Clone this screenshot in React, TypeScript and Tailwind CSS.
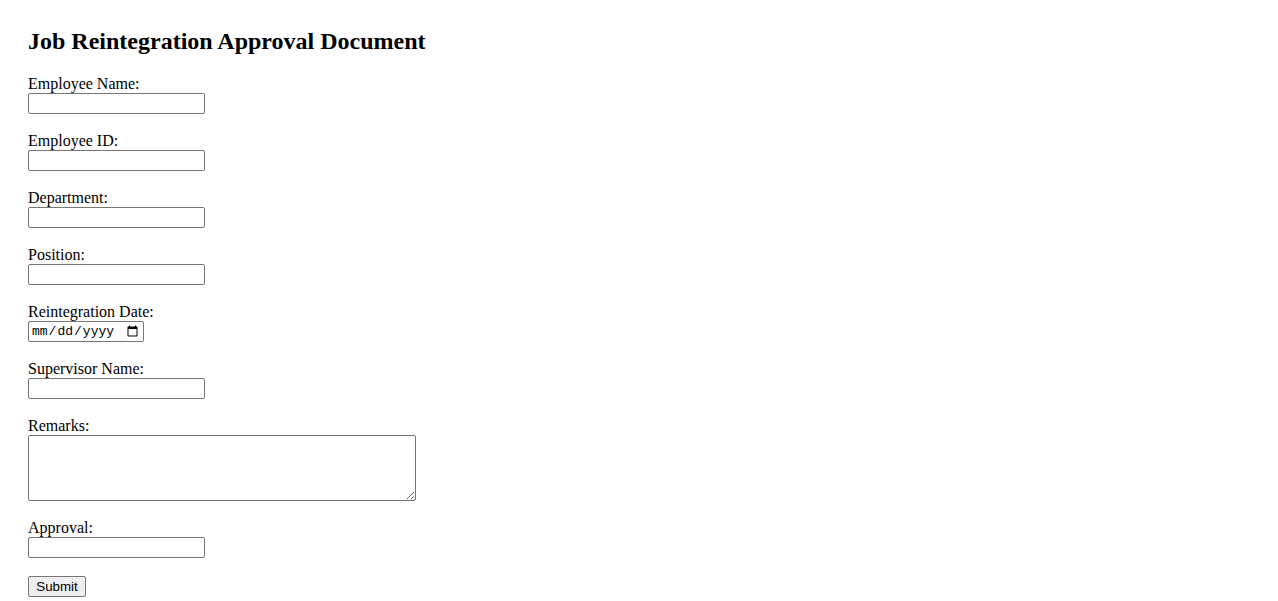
import React from "react";

const inputCls =
  "block w-[177px] h-[21px] mt-[1px] border border-[#767676] rounded-[2px] bg-white px-[2px] text-[13.33px] font-['Liberation_Sans',Arial,sans-serif]";

function Field({ label, children }: { label: string; children: React.ReactNode }) {
  return (
    <div className="flex flex-col items-start mb-[17px]">
      <label className="block h-[18px] pt-[1px] leading-[18px] text-[16px] text-black">{label}</label>
      {children}
    </div>
  );
}

export default function App() {
  return (
    <div className="min-h-screen bg-white px-[28px] pt-[27px] font-['Liberation_Serif','Times_New_Roman',serif] text-black">
      <h2 className="text-[24px] leading-[28px] font-bold mb-[19px]">Job Reintegration Approval Document</h2>
      <form onSubmit={(e) => e.preventDefault()}>
        <Field label="Employee Name:">
          <input type="text" className={inputCls} />
        </Field>
        <Field label="Employee ID:">
          <input type="text" className={inputCls} />
        </Field>
        <Field label="Department:">
          <input type="text" className={inputCls} />
        </Field>
        <Field label="Position:">
          <input type="text" className={inputCls} />
        </Field>
        <Field label="Reintegration Date:">
          <input
            type="date"
            className="block w-[116px] h-[21px] mt-[1px] border border-[#767676] rounded-[2px] bg-white px-[2px] text-[13px] font-['Liberation_Mono','DejaVu_Sans_Mono',monospace]"
          />
        </Field>
        <Field label="Supervisor Name:">
          <input type="text" className={inputCls} />
        </Field>
        <Field label="Remarks:">
          <textarea className="block w-[388px] h-[66px] mt-[1px] border border-[#767676] rounded-[2px] bg-white p-[2px] text-[13.33px] font-['Liberation_Mono',monospace]" />
        </Field>
        <div className="flex flex-col items-start mb-[18px]">
          <label className="block h-[18px] pt-[1px] leading-[18px] text-[16px]">Approval:</label>
          <input type="text" className={inputCls} />
        </div>
        <button
          type="submit"
          className="block w-[58px] h-[21px] border border-[#767676] rounded-[2px] bg-[#efefef] text-[13.33px] leading-[19px] font-['Liberation_Sans',Arial,sans-serif] text-black"
        >
          Submit
        </button>
      </form>
    </div>
  );
}
